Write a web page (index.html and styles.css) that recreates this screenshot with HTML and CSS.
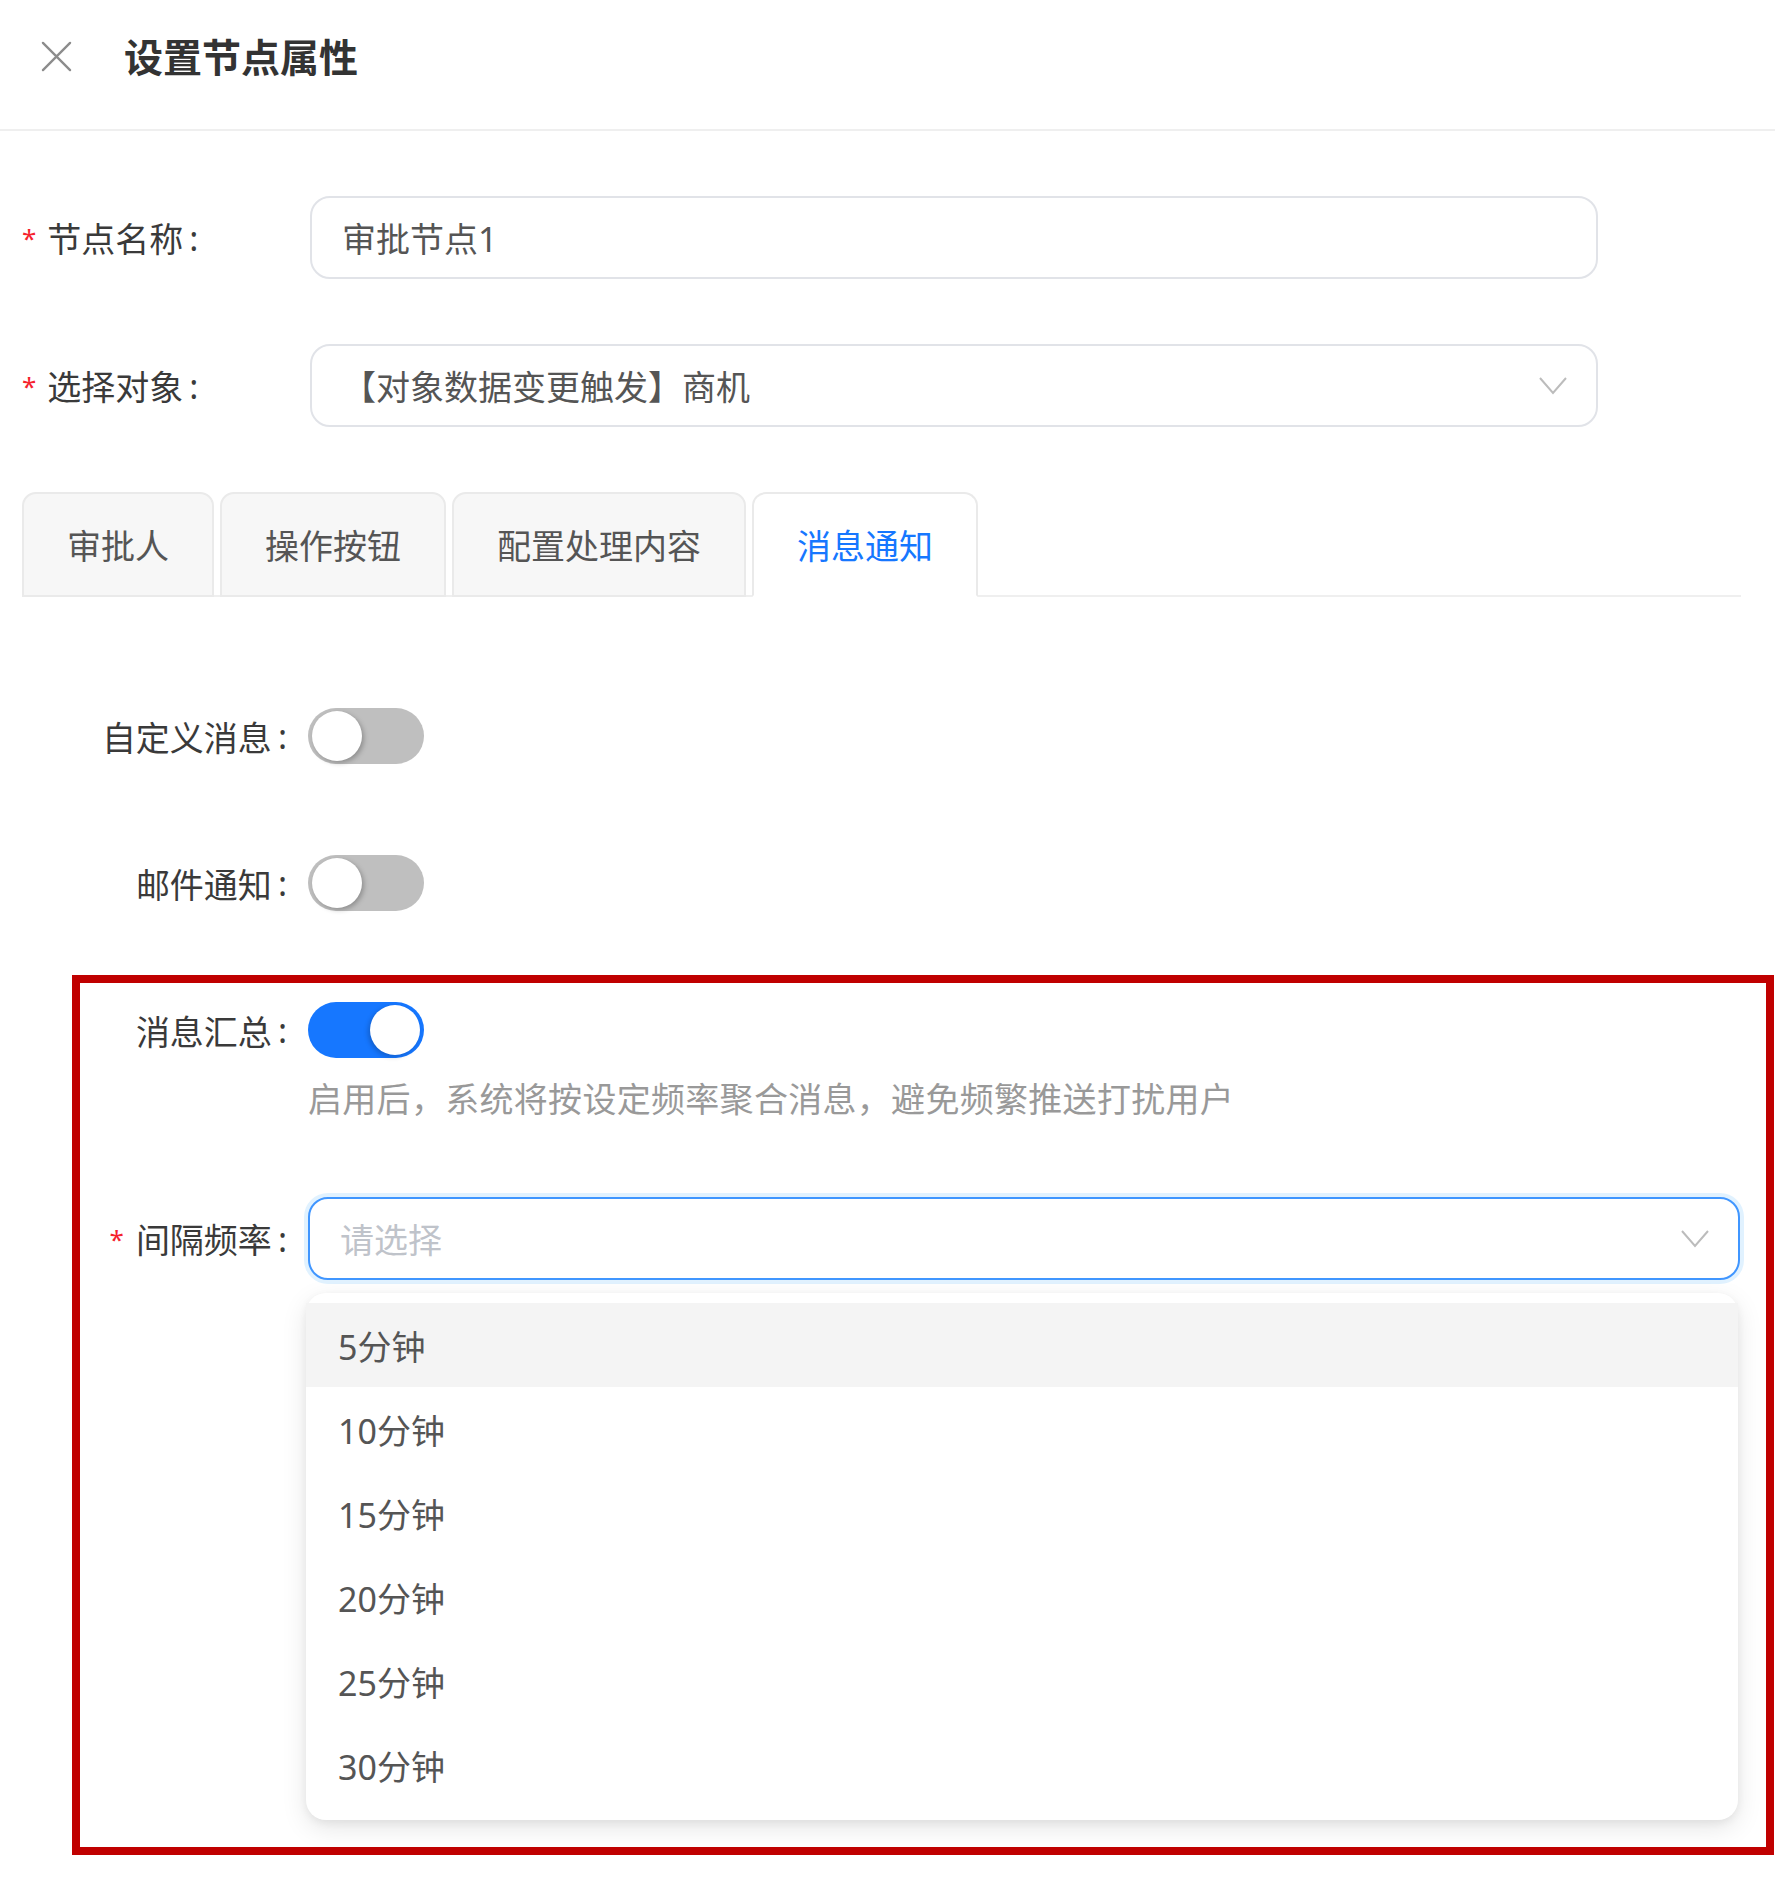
FILE: index.html
```html
<!DOCTYPE html>
<html lang="zh-CN">
<head>
    <meta charset="UTF-8">
    <meta name="viewport" content="width=device-width, initial-scale=1.0">
    <title>设置节点属性</title>
    <link rel="stylesheet" href="styles.css">
</head>
<body>
    <div class="drawer">
        <div class="drawer-header">
            <button class="close-btn" aria-label="关闭">
                <svg viewBox="0 0 32 32" width="31" height="31">
                    <path d="M2 2 L30 30 M30 2 L2 30" stroke="#8c8c8c" stroke-width="2.4" fill="none" stroke-linecap="round"/>
                </svg>
            </button>
            <h1 class="drawer-title">设置节点属性</h1>
        </div>

        <div class="base-form">
            <div class="form-item">
                <label class="form-label"><span class="required">*</span>节点名称<span class="colon">:</span></label>
                <div class="input">审批节点1</div>
            </div>
            <div class="form-item">
                <label class="form-label"><span class="required">*</span>选择对象<span class="colon">:</span></label>
                <div class="input select">
                    <span>【对象数据变更触发】商机</span>
                    <svg class="arrow" viewBox="0 0 28 18" width="28" height="18">
                        <path d="M1 1 L14 16 L27 1" stroke="#bcbcbc" stroke-width="2" fill="none"/>
                    </svg>
                </div>
            </div>
        </div>

        <div class="tab-nav">
            <div class="tab">审批人</div>
            <div class="tab">操作按钮</div>
            <div class="tab">配置处理内容</div>
            <div class="tab active">消息通知</div>
        </div>

        <div class="tab-pane">
            <div class="pane-item first">
                <label class="pane-label">自定义消息<span class="colon">:</span></label>
                <span class="switch"><span class="knob"></span></span>
            </div>
            <div class="pane-item second">
                <label class="pane-label">邮件通知<span class="colon">:</span></label>
                <span class="switch"><span class="knob"></span></span>
            </div>

            <div class="digest-box">
                <div class="pane-item">
                    <label class="pane-label">消息汇总<span class="colon">:</span></label>
                    <span class="switch on"><span class="knob"></span></span>
                </div>
                <p class="help-text">启用后，系统将按设定频率聚合消息，避免频繁推送打扰用户</p>

                <div class="pane-item interval">
                    <label class="pane-label"><span class="required">*</span>间隔频率<span class="colon">:</span></label>
                    <div class="input select focused">
                        <span class="placeholder">请选择</span>
                        <svg class="arrow" viewBox="0 0 28 18" width="28" height="18">
                            <path d="M1 1 L14 16 L27 1" stroke="#bcbcbc" stroke-width="2" fill="none"/>
                        </svg>
                    </div>
                </div>

                <ul class="dropdown">
                    <li class="option hover">5分钟</li>
                    <li class="option">10分钟</li>
                    <li class="option">15分钟</li>
                    <li class="option">20分钟</li>
                    <li class="option">25分钟</li>
                    <li class="option">30分钟</li>
                </ul>
            </div>
        </div>
    </div>
</body>
</html>
```

FILE: styles.css
```css
* {
    margin: 0;
    padding: 0;
    box-sizing: border-box;
}

body {
    font-family: "Noto Sans", "Noto Sans CJK SC", sans-serif;
    color: #3a3a3a;
    background: #fff;
}

.drawer {
    width: 1775px;
    min-height: 1889px;
}

/* header */
.drawer-header {
    height: 131px;
    display: flex;
    align-items: center;
    padding: 0 0 16px 41px;
    border-bottom: 2px solid #efefef;
}

.close-btn {
    width: 31px;
    height: 31px;
    border: none;
    background: none;
    display: flex;
    cursor: pointer;
}

.drawer-title {
    margin-left: 52px;
    font-size: 39px;
    font-weight: 700;
    color: #333;
    line-height: 1;
}

/* top form */
.base-form {
    padding: 65px 0 0 22px;
}

.form-item {
    display: flex;
    align-items: center;
    margin-bottom: 65px;
}

.form-label {
    width: 288px;
    font-size: 34px;
    color: #3a3a3a;
    display: flex;
    align-items: center;
}

.required {
    color: #f5222d;
    font-size: 26px;
    margin-right: 11px;
}

.colon {
    margin-left: 6px;
}

.input {
    width: 1288px;
    height: 83px;
    border: 2px solid #e1e3e8;
    border-radius: 20px;
    padding: 0 30px;
    display: flex;
    align-items: center;
    font-size: 34px;
    color: #555;
    background: #fff;
}

.select {
    justify-content: space-between;
}

.select .arrow {
    margin-right: -1px;
}

/* tabs */
.tab-nav {
    display: flex;
    gap: 6px;
    margin: 0 34px 0 22px;
    border-bottom: 2px solid #efefef;
}

.tab {
    height: 105px;
    margin-bottom: -2px;
    padding: 0 43px;
    display: flex;
    align-items: center;
    font-size: 34px;
    color: #555;
    background: #f7f7f7;
    border: 2px solid #eaeaea;
    border-radius: 14px 14px 0 0;
}

.tab.active {
    background: #fff;
    color: #1677ff;
    border-bottom-color: #fff;
}

/* message settings pane */
.pane-item {
    display: flex;
    align-items: center;
}

.pane-item.first {
    margin-top: 111px;
}

.pane-item.second {
    margin-top: 91px;
}

.pane-label {
    width: 287px;
    margin-right: 21px;
    font-size: 34px;
    color: #3a3a3a;
    display: flex;
    align-items: center;
    justify-content: flex-end;
}

.switch {
    position: relative;
    width: 116px;
    height: 56px;
    border-radius: 28px;
    background: #bfbfbf;
}

.switch .knob {
    position: absolute;
    top: 3px;
    left: 4px;
    width: 50px;
    height: 50px;
    border-radius: 50%;
    background: #fff;
    box-shadow: 2px 2px 5px rgba(0, 0, 0, 0.25);
}

.switch.on {
    background: #1677ff;
}

.switch.on .knob {
    left: auto;
    right: 4px;
    box-shadow: -2px 2px 5px rgba(0, 0, 0, 0.2);
}

/* highlighted digest block */
.digest-box {
    margin: 64px 0 0 72px;
    width: 1702px;
    border: 8px solid #c00000;
    padding: 19px 0 27px;
}

.digest-box .pane-label {
    width: 207px;
}

.help-text {
    margin: 19px 0 0 228px;
    font-size: 34px;
    letter-spacing: 0.3px;
    line-height: 44px;
    color: #999;
}

.pane-item.interval {
    margin-top: 76px;
}

.interval .required {
    margin-right: 12px;
}

.input.focused {
    width: 1432px;
    border-color: #4096ff;
    box-shadow: 0 0 0 4px rgba(5, 145, 255, 0.12);
}

.placeholder {
    color: #bfc3ca;
}

.dropdown {
    list-style: none;
    margin: 13px 0 0 226px;
    width: 1432px;
    padding: 10px 0 13px;
    border-radius: 20px;
    background: #fff;
    box-shadow: 0 8px 26px rgba(0, 0, 0, 0.1), 0 3px 8px rgba(0, 0, 0, 0.06);
}

.option {
    height: 84px;
    padding-left: 32px;
    display: flex;
    align-items: center;
    font-size: 34px;
    color: #555;
}

.option.hover {
    background: #f4f4f4;
}
```
